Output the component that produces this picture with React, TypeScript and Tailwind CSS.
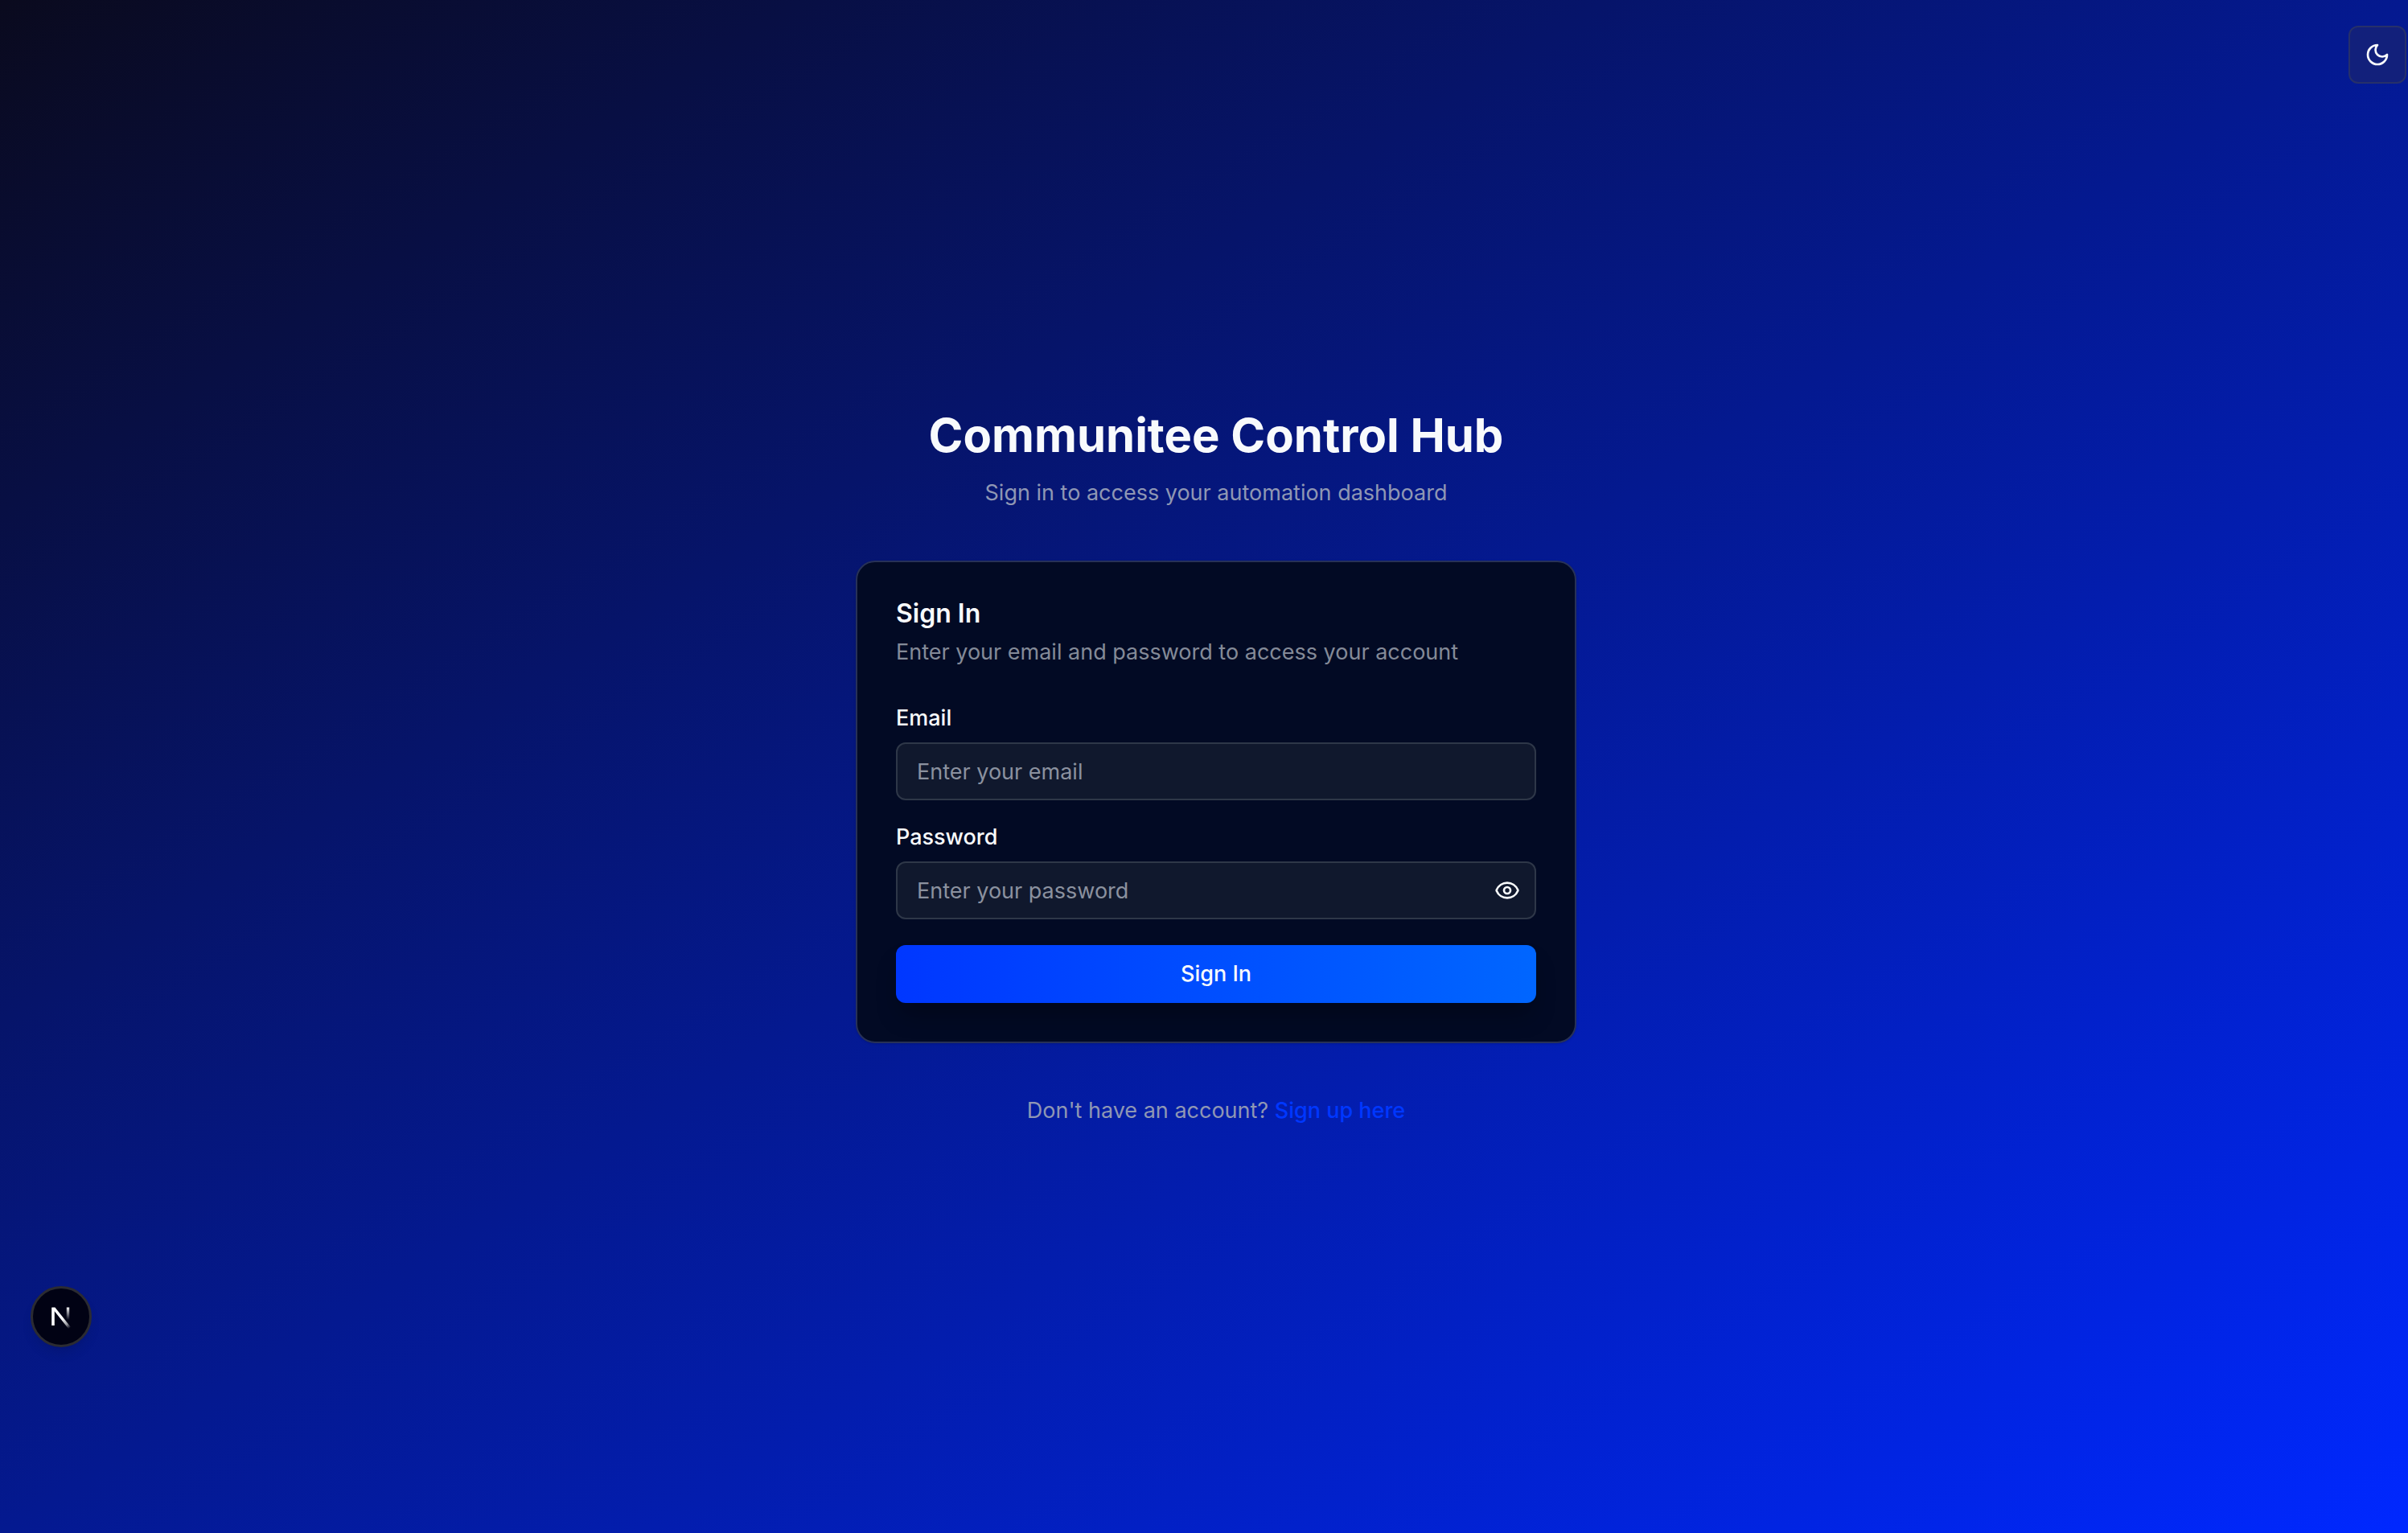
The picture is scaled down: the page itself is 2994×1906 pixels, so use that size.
import { useState } from "react";
import { Eye, EyeOff } from "lucide-react";

const fieldClass =
  "h-[72px] w-full rounded-xl border-2 border-[#2e3748] bg-[#10182d] px-6 text-[27px] leading-10 text-white placeholder:text-[#8b919f] outline-none";

function MoonIcon() {
  return (
    <svg
      className="size-8"
      viewBox="0 0 24 24"
      fill="none"
      stroke="currentColor"
      strokeWidth="2"
      strokeLinecap="round"
      strokeLinejoin="round"
      aria-hidden="true"
    >
      <path d="M12 3a6 6 0 0 0 9 9 9 9 0 1 1-9-9Z" />
    </svg>
  );
}

function DevBadge() {
  return (
    <button
      type="button"
      aria-label="Open developer tools"
      className="fixed bottom-[231px] left-[38px] flex size-[76px] items-center justify-center rounded-full border-[3px] border-[#2b2b31] bg-[#010214] shadow-lg"
    >
      <svg className="size-10" viewBox="0 0 40 40" fill="none" aria-hidden="true">
        <defs>
          <linearGradient id="diagonal" x1="22" y1="22" x2="31" y2="34" gradientUnits="userSpaceOnUse">
            <stop stopColor="#fff" />
            <stop offset="0.6" stopColor="#fff" stopOpacity="0.6" />
            <stop offset="1" stopColor="#fff" stopOpacity="0" />
          </linearGradient>
          <linearGradient id="upright" x1="28" y1="8" x2="28" y2="24" gradientUnits="userSpaceOnUse">
            <stop stopColor="#fff" />
            <stop offset="1" stopColor="#fff" stopOpacity="0" />
          </linearGradient>
        </defs>
        <path d="M10 31V9" stroke="#fff" strokeWidth="3.6" />
        <path d="M8.2 8.5H12.4L32 33L29.5 35.5L10 11Z" fill="url(#diagonal)" />
        <path d="M28.5 8.5V24" stroke="url(#upright)" strokeWidth="3.4" />
      </svg>
    </button>
  );
}

export default function App() {
  const [visible, setVisible] = useState(false);

  return (
    <div className="relative flex min-h-screen items-center justify-center overflow-hidden bg-[linear-gradient(to_bottom_right,#0a0a1e,#041990,#0028ff)] pl-[30px] font-['Inter',sans-serif] text-[27px] leading-10 text-[#f8fafc]">
      <button
        type="button"
        aria-label="Toggle theme"
        className="absolute top-8 right-[2px] flex size-[72px] items-center justify-center rounded-xl border-2 border-[#26306a] bg-[#12207b]"
      >
        <MoonIcon />
      </button>

      <main className="flex w-full max-w-4xl flex-col gap-16">
        <header className="flex flex-col gap-4 text-center">
          <h1 className="text-[58px] leading-[72px] font-bold">Communitee Control Hub</h1>
          <p className="text-[#8f97b4]">Sign in to access your automation dashboard</p>
        </header>

        <section className="flex flex-col gap-12 rounded-3xl border-2 border-[#273157] bg-[#020a24] p-12 shadow-sm">
          <div className="flex flex-col gap-3">
            <h2 className="text-[32px] leading-8 font-semibold">Sign In</h2>
            <p className="text-[#848a98]">Enter your email and password to access your account</p>
          </div>

          <form className="flex flex-col gap-8" onSubmit={(e) => e.preventDefault()}>
            <div className="flex flex-col gap-4">
              <label htmlFor="email" className="leading-7 font-medium">
                Email
              </label>
              <input id="email" type="email" placeholder="Enter your email" className={fieldClass} />
            </div>

            <div className="flex flex-col gap-4">
              <label htmlFor="password" className="leading-7 font-medium">
                Password
              </label>
              <div className="relative">
                <input
                  id="password"
                  type={visible ? "text" : "password"}
                  placeholder="Enter your password"
                  className={fieldClass}
                />
                <button
                  type="button"
                  aria-label={visible ? "Hide password" : "Show password"}
                  onClick={() => setVisible(!visible)}
                  className="absolute inset-y-0 right-0 flex w-[72px] items-center justify-center"
                >
                  {visible ? <EyeOff className="size-8" /> : <Eye className="size-8" />}
                </button>
              </div>
            </div>

            <button
              type="submit"
              className="h-[72px] rounded-xl bg-[linear-gradient(to_right,#0037ff,#0066ff)] font-medium shadow-[0_20px_30px_-6px_rgba(0,0,0,0.3)]"
            >
              Sign In
            </button>
          </form>
        </section>

        <p className="text-center text-[#8f97b4]">
          Don't have an account?{" "}
          <a href="#signup" className="font-medium text-[#0037ff]">
            Sign up here
          </a>
        </p>
      </main>

      <DevBadge />
    </div>
  );
}
